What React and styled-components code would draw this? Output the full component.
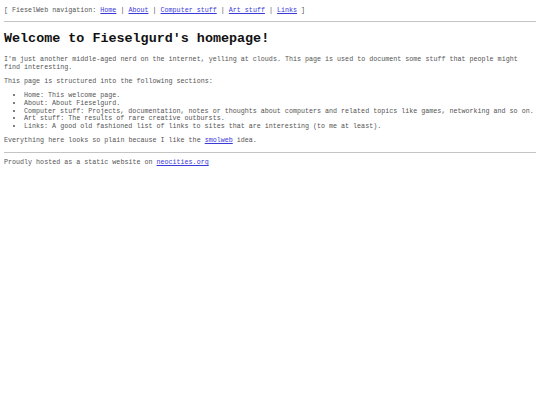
import styled, { createGlobalStyle } from "styled-components";

const Global = createGlobalStyle`
  html, body { background: #fff; }
  body {
    margin: 0;
    font-family: "Liberation Mono", "Courier New", monospace;
    font-size: 6.7px;
    line-height: 7.7px;
    color: #555;
  }
`;

const Page = styled.div`
  display: flow-root;
  padding: 7px 4px 8px;
`;

const Para = styled.p`
  margin: 6.6px 0;
  &:first-child { margin-top: 0; }
`;

const Rule = styled.hr`
  margin: 6.6px 0;
  border: 0;
  border-top: 1px solid #c4c4c4;
  height: 0;
`;

const Title = styled.h1`
  font-size: 13.4px;
  line-height: 15.1px;
  font-weight: bold;
  margin: 9px 0 9.5px;
  color: #111;
`;

const List = styled.ul`
  margin: 6.4px 0 6.5px;
  padding-left: 20px;
`;

const Link = styled.a`
  color: #3a3ad8;
  text-decoration: underline;
`;

const nav = ["Home", "About", "Computer stuff", "Art stuff", "Links"];

const sections = [
  ["Home", "This welcome page."],
  ["About", "About Fieselgurd."],
  ["Computer stuff", "Projects, documentation, notes or thoughts about computers and related topics like games, networking and so on."],
  ["Art stuff", "The results of rare creative outbursts."],
  ["Links", "A good old fashioned list of links to sites that are interesting (to me at least)."],
];

export default function App() {
  return (
    <Page>
      <Global />
      <Para>
        [ FieselWeb navigation:{" "}
        {nav.map((n, i) => (
          <span key={n}>
            <Link href="#">{n}</Link>
            {i < nav.length - 1 ? " | " : " ]"}
          </span>
        ))}
      </Para>
      <Rule />
      <Title>Welcome to Fieselgurd's homepage!</Title>
      <Para>
        I'm just another middle-aged nerd on the internet, yelling at clouds. This page is used to document some stuff that people might find interesting.
      </Para>
      <Para>This page is structured into the following sections:</Para>
      <List>
        {sections.map(([k, v]) => (
          <li key={k}>{k}: {v}</li>
        ))}
      </List>
      <Para>
        Everything here looks so plain because I like the <Link href="#">smolweb</Link> idea.
      </Para>
      <Rule />
      <Para>
        Proudly hosted as a static website on <Link href="#">neocities.org</Link>
      </Para>
    </Page>
  );
}
